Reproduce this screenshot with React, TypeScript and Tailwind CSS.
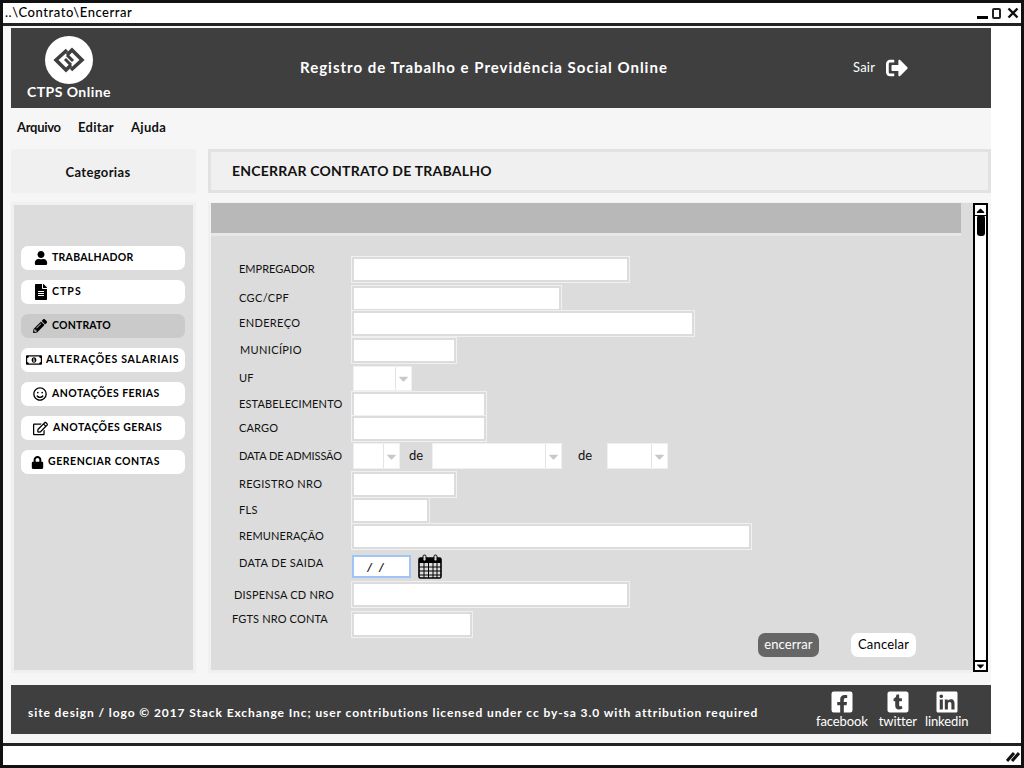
import React from "react";
import { FaUser, FaFileAlt, FaPencilAlt, FaRegMoneyBillAlt, FaRegSmile, FaRegEdit, FaLock, FaSignOutAlt, FaFacebookSquare, FaTumblrSquare, FaLinkedin, FaCaretDown, FaCaretUp } from "react-icons/fa";

const nav = [
  { t: "TRABALHADOR", I: FaUser, c: "pl-[13px] gap-[4px]", s: 14, k: "tracking-[0.28px]" },
  { t: "CTPS", I: FaFileAlt, c: "pl-[12px] gap-[3px]", s: 16, k: "tracking-[1.05px]" },
  { t: "CONTRATO", I: FaPencilAlt, c: "pl-[12px] gap-[5px]", s: 14, k: "tracking-[0.18px]", on: true },
  { t: "ALTERAÇÕES SALARIAIS", I: FaRegMoneyBillAlt, c: "pl-[5px] gap-[4px]", s: 16, k: "tracking-[0.7px]" },
  { t: "ANOTAÇÕES FERIAS", I: FaRegSmile, c: "pl-[12px] gap-[5px]", s: 14, k: "tracking-[0.43px]" },
  { t: "ANOTAÇÕES GERAIS", I: FaRegEdit, c: "pl-[12px] gap-[5px]", s: 15, k: "tracking-[0.43px]" },
  { t: "GERENCIAR CONTAS", I: FaLock, c: "pl-[10px] gap-[4px]", s: 13, k: "tracking-[0.55px]" },
];

const Field = ({ w }: { w: string }) => <div className={`h-[21px] bg-white shadow-[0_0_0_2px_#dcdcdc,0_0_0_3px_#f0f0f0] ${w}`} />;

const Combo = ({ w }: { w: string }) => (
  <div className="flex h-full gap-[1px] bg-[#e4e4e4] shadow-[0_0_0_1px_#f0f0f0]">
    <div className={`bg-white ${w}`} />
    <div className="w-[15px] bg-white flex items-center justify-center text-[#c8c8c8]"><FaCaretDown size={15} /></div>
  </div>
);

const Row = ({ label, c, lc = "tracking-[0.15px]", children }: { label: string; c: string; lc?: string; children: React.ReactNode }) => (
  <div className={`flex items-center ml-[28px] ${c}`}>
    <div className={`w-[115px] shrink-0 pb-[2px] text-[11px] leading-none text-[#111] whitespace-nowrap ${lc}`}>{label}</div>
    {children}
  </div>
);

const Calendar = () => (
  <svg width="24" height="25" viewBox="0 0 24 25" className="ml-[7px]">
    <rect x="1" y="4" width="22" height="20" rx="1.5" fill="#dcdcdc" stroke="#000" strokeWidth="1.6" />
    <rect x="1" y="4" width="22" height="5" fill="#000" />
    <rect x="5" y="1" width="3" height="6" rx="1.5" fill="#dcdcdc" stroke="#000" />
    <rect x="16" y="1" width="3" height="6" rx="1.5" fill="#dcdcdc" stroke="#000" />
    <path d="M1 13h22M1 17h22M1 21h22M6 9v15M10.500 9v15M15 9v15M19 9v15" stroke="#000" strokeWidth="1" />
  </svg>
);

const Logo = () => (
  <div className="w-[48px] h-[48px] rounded-full bg-white flex items-center justify-center">
    <svg width="34" height="26" viewBox="0 0 34 26" fill="none" stroke="#3f3f3f" strokeWidth="3.600">
      <path d="M15 3L4 13l10 10 5-5" />
      <path d="M19 23l11-10L20 3l-5 5" />
      <path d="M15 8l6 6M19 18l-6-6" strokeWidth="3" />
    </svg>
  </div>
);

const Social = ({ I, t, c = "" }: { I: any; t: string; c?: string }) => (
  <div className={`flex flex-col items-center ${c}`}>
    <I size={24} className="text-white" />
    <span className="text-[13px] leading-[13px] mt-[1px] text-white tracking-[-0.1px]">{t}</span>
  </div>
);

export default function App() {
  return (
    <div className="w-[1024px] h-[768px] overflow-hidden flex flex-col bg-white border-[3px] border-[#111] font-['Lato','Liberation_Sans',sans-serif] text-[#111]">
      <div className="h-[20px] shrink-0 flex items-center justify-between pl-[2px] pr-[2px] border-b-[3px] border-[#222] box-content bg-white">
        <span className="text-[13px] font-medium tracking-[0.55px] text-black">..\Contrato\Encerrar</span>
        <div className="flex items-center gap-[4px] text-black">
          <div className="w-[11px] h-[3px] bg-black mt-[8px]" />
          <div className="w-[9px] h-[11px] rounded-[2px] border-2 border-[#222]" />
          <svg width="12" height="12" viewBox="0 0 12 12" className="ml-[2px]"><path d="M1.500 1.500l9 9M10.500 1.500l-9 9" stroke="#111" strokeWidth="2.400" /></svg>
        </div>
      </div>

      <div className="flex-1 min-h-0 flex">
        <div className="w-[988px] bg-[#f6f6f6] flex flex-col pl-[8px] pt-[2px]">
          <header className="h-[80px] shrink-0 bg-[#3f3f3f] flex items-center text-white">
            <div className="w-[116px] self-start flex flex-col items-center pt-[8px]">
              <Logo />
              <span className="text-[14px] font-bold leading-[16px] tracking-[0.45px]">CTPS Online</span>
            </div>
            <div className="ml-[173px] w-[370px] text-[15px] font-bold tracking-[1px] whitespace-nowrap mb-[1px]">Registro de Trabalho e Previdência Social Online</div>
            <div className="ml-[183px] flex items-center gap-[11px] mb-[1px]">
              <span className="text-[13px] tracking-[0.2px]">Sair</span>
              <FaSignOutAlt size={22} />
            </div>
          </header>

          <nav className="h-[41px] shrink-0 flex items-center pl-[6px] gap-[17px] text-[13px] font-bold pb-[2px]">
            <span className="w-[44px] tracking-[-0.3px]">Arquivo</span><span className="tracking-[0.3px]">Editar</span><span className="tracking-[0.3px]">Ajuda</span>
          </nav>

          <div className="h-[44px] shrink-0 flex">
            <div className="w-[185px] bg-[#f0f0f0] rounded-[2px] flex items-center justify-center text-[13px] font-bold tracking-[0.35px] pr-[11px] pt-[4px]">Categorias</div>
            <div className="ml-[12px] w-[783px] bg-[#f0f0f0] border-[3px] border-[#e2e2e2] flex items-center pl-[21px] pb-[2px] text-[14px] font-bold tracking-[0.22px]">ENCERRAR CONTRATO DE TRABALHO</div>
          </div>

          <div className="flex-none h-[471px] flex mt-[9px]">
            <aside className="w-[185px] bg-[#dcdcdc] border-[3px] border-[#f0f0f0] flex flex-col pt-[41px] pl-[7px] gap-[10px]">
              {nav.map((n) => (
                <div key={n.t} className={`w-[164px] h-[24px] rounded-[7px] flex items-center ${n.on ? "bg-[#cacaca]" : "bg-white"} ${n.c}`}>
                  <n.I size={n.s} className="text-black shrink-0" />
                  <span className={`text-[10.500px] font-bold text-black whitespace-nowrap ${n.k}`}>{n.t}</span>
                </div>
              ))}
            </aside>

            <div className="ml-[12px] w-[765px] relative bg-[#dcdcdc] border-l-[3px] border-t border-b-[3px] border-[#f0f0f0]">
              <div className="w-[750px] h-[30px] bg-[#b8b8b8]" />
              <div className="border-t-[3px] border-[#e8e8e8] w-[750px]" />
              <Row label="EMPREGADOR" c="mt-[23px]" lc="tracking-[0px]"><Field w="w-[273px]" /></Row>
              <Row label="CGC/CPF" c="mt-[8px]" lc="tracking-[0.35px]"><Field w="w-[205px]" /></Row>
              <Row label="ENDEREÇO" c="mt-[4px]" lc="tracking-[0.35px]"><Field w="w-[338px]" /></Row>
              <Row label="MUNICÍPIO" c="mt-[6px]" lc="tracking-[0.35px] ml-[1px] -mr-[1px]"><Field w="w-[100px]" /></Row>
              <Row label="UF" c="mt-[6px] h-[23px]"><Combo w="w-[41px]" /></Row>
              <Row label="ESTABELECIMENTO" c="mt-[4px]"><Field w="w-[130px]" /></Row>
              <Row label="CARGO" c="mt-[3px]"><Field w="w-[130px]" /></Row>
              <Row label="DATA DE ADMISSÃO" c="mt-[5px] h-[24px]" lc="tracking-[-0.1px]">
                <Combo w="w-[29px]" />
                <span className="text-[13px] ml-[10px] w-[24px]">de</span>
                <Combo w="w-[112px]" />
                <span className="text-[13px] ml-[17px] w-[30px]">de</span>
                <Combo w="w-[43px]" />
              </Row>
              <Row label="REGISTRO NRO" c="mt-[6px]" lc="tracking-[0.35px]"><Field w="w-[100px]" /></Row>
              <Row label="FLS" c="mt-[5px]" lc="tracking-[0.35px]"><Field w="w-[73px]" /></Row>
              <Row label="REMUNERAÇÃO" c="mt-[5px]" lc="tracking-[0.1px]"><Field w="w-[395px]" /></Row>
              <Row label="DATA DE SAIDA" c="mt-[8px] h-[23px]" lc="tracking-[0.35px] -translate-y-[3px]">
                <div className="w-[59px] -ml-[2px] h-[23px] bg-white border-2 border-[#a0c4f8] text-[12px] font-bold italic pl-[13px] leading-[19px] tracking-[2px]">/ /</div>
                <Calendar />
              </Row>
              <Row label="DISPENSA CD NRO" c="mt-[6px]" lc="tracking-[0.2px] -ml-[5px] mr-[5px] translate-y-[1px]"><Field w="w-[273px]" /></Row>
              <Row label="FGTS NRO CONTA" c="mt-[9px]" lc="tracking-[0.15px] -ml-[7px] mr-[7px] -translate-y-[5px]"><Field w="w-[116px]" /></Row>
              <div className="flex justify-end mr-[57px] -mt-[2px] gap-[32px]">
                <button className="w-[61px] h-[24px] rounded-[7px] bg-[#666] text-white text-[13px] tracking-[0.1px]">encerrar</button>
                <button className="w-[65px] h-[24px] rounded-[7px] bg-white text-black text-[13px] tracking-[0.2px]">Cancelar</button>
              </div>
              <div className="absolute -right-[15px] top-0 w-[15px] h-[469px] bg-white border-2 border-black flex flex-col justify-between">
                <div className="h-[11px] border-b border-black flex items-center justify-center"><FaCaretUp size={13} className="text-black" /></div>
                <div className="absolute top-[10px] left-[2px] w-[8px] h-[21px] rounded-[3px] bg-black" />
                <div className="h-[10px] border-t-2 border-black flex items-center justify-center"><FaCaretDown size={12} className="text-black" /></div>
              </div>
            </div>
          </div>

          <footer className="h-[49px] shrink-0 mt-[12px] bg-[#3f3f3f] text-white flex items-center">
            <span className="ml-[17px] w-[788px] text-[12px] font-bold tracking-[0.91px] whitespace-nowrap pt-[7px]">site design / logo © 2017 Stack Exchange Inc; user contributions licensed under cc by-sa 3.0 with attribution required</span>
            <div className="flex gap-[8px] items-center mb-[1px]">
              <Social I={FaFacebookSquare} t="facebook" c="mr-[3px]" />
              <Social I={FaTumblrSquare} t="twitter" />
              <Social I={FaLinkedin} t="linkedin" />
            </div>
          </footer>
        </div>
        <div className="flex-1 bg-white" />
      </div>

      <div className="h-[19px] shrink-0 border-t-[3px] border-[#222] bg-white box-content flex items-center justify-end pr-[1px]">
        <svg width="14" height="12" viewBox="0 0 14 12"><path d="M1 11l7-8M6 11l7-8" stroke="#111" strokeWidth="3" /></svg>
      </div>
    </div>
  );
}
